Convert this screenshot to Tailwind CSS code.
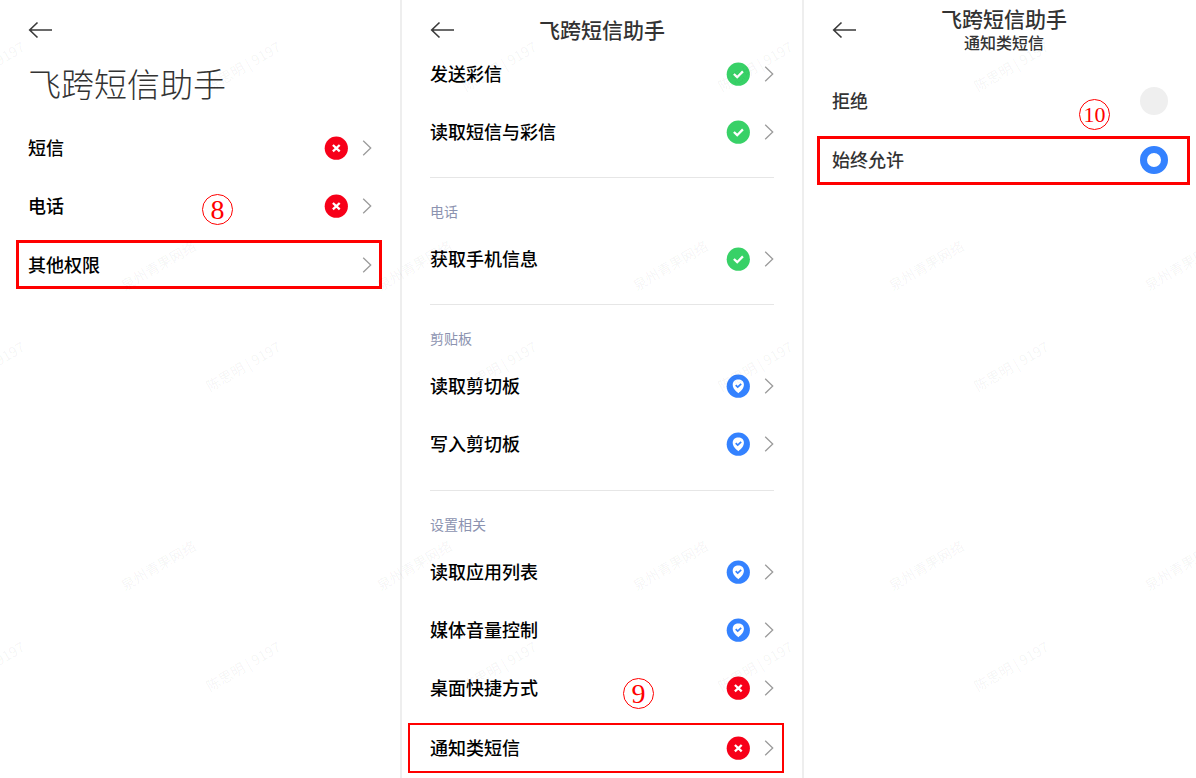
<!DOCTYPE html>
<html lang="zh-CN">
<head>
<meta charset="utf-8">
<meta name="viewport" content="width=device-width, initial-scale=1">
<title>飞跨短信助手</title>
<script src="https://cdn.jsdelivr.net/npm/@tailwindcss/browser@4"></script>
</head>
<body class="relative min-h-screen overflow-x-hidden bg-white font-['Noto_Sans_CJK_SC',sans-serif] text-lg font-medium text-black">

<!-- Shared icon shapes -->
<svg class="hidden" aria-hidden="true">
  <symbol id="back" viewBox="0 0 24 18"><path d="M9.500 1.500 1.700 9 9.500 16.500M2 9H24" fill="none" stroke="#3a3a3a" stroke-width="1.6"/></symbol>
  <symbol id="chevron" viewBox="0 0 10 16"><path d="M1.2 .8 8.7 8 1.2 15.2" fill="none" stroke="#9b9b9b" stroke-width="1.3"/></symbol>
  <symbol id="deny" viewBox="0 0 24 24"><circle cx="12.3" cy="12.200" r="11.600" fill="#f70019"/><path d="M8.900 9 15.700 15.400M15.700 9 8.900 15.400" stroke="#fff" stroke-width="2.3"/></symbol>
  <symbol id="allow" viewBox="0 0 24 24"><circle cx="12.3" cy="12.200" r="11.600" fill="#38d167"/><path d="M7.900 12 11.200 15.200 16.900 9.400" fill="none" stroke="#fff" stroke-width="2.3"/></symbol>
  <symbol id="guard" viewBox="0 0 24 24"><circle cx="12.3" cy="12.2" r="11.6" fill="#3482ff"/><path d="M12.3 5.600C15.300 5.600 17.900 7.300 17.900 10.800C17.900 14.400 15 17 12.300 19.300C9.600 17 6.700 14.400 6.700 10.800C6.700 7.300 9.300 5.600 12.300 5.600Z" fill="#fff"/><path d="M9.700 11.200 11.700 13.100 15.200 9.800" fill="none" stroke="#3482ff" stroke-width="1.7"/></symbol>
</svg>

<main class="grid min-h-screen grid-cols-[400fr_402fr_394fr]">

  <section class="pl-7 pr-7">
    <header class="flex h-[119px] flex-col pt-[21px]">
      <button type="button" aria-label="返回" class="h-[18px] w-6"><svg class="h-[18px] w-6"><use href="#back"/></svg></button>
      <h1 class="mt-[19px] text-[33px] leading-[50px] font-light text-[#333]">飞跨短信助手</h1>
    </header>
    <div class="relative">
      <button type="button" class="flex h-[58px] w-full items-center"><span class="mr-auto pb-0.5">短信</span><svg class="h-6 w-6"><use href="#deny"/></svg><svg class="ml-3.5 h-4 w-2.5"><use href="#chevron"/></svg></button>
      <button type="button" class="flex h-[58px] w-full items-center"><span class="mr-auto pb-0.5">电话</span><svg class="h-6 w-6"><use href="#deny"/></svg><svg class="ml-3.5 h-4 w-2.5"><use href="#chevron"/></svg></button>
      <div class="-mr-2.5 -ml-3 mt-[5px]">
        <button type="button" class="flex h-[49px] w-full items-center border-3 border-[#f00] pr-[7px] pl-[9px]"><span class="mr-auto pb-0.5">其他权限</span><svg class="h-4 w-2.5"><use href="#chevron"/></svg></button>
      </div>
      <span class="absolute top-[75px] left-[174px] flex size-[31px] items-center justify-center rounded-full border border-[#f00] font-['Liberation_Serif',serif] text-[28px] leading-none font-normal text-[#f00]">8</span>
    </div>
  </section>

  <section class="border-l-2 border-[#eee] pl-7 pr-7">
    <header class="grid h-[45px] grid-cols-[24px_1fr_24px] pt-[21px]">
      <button type="button" aria-label="返回" class="h-[18px] w-6"><svg class="h-[18px] w-6"><use href="#back"/></svg></button>
      <h2 class="text-center text-[21px] leading-4 text-[#333]">飞跨短信助手</h2>
    </header>
    <div class="pb-4">
      <button type="button" class="flex h-[58px] w-full items-center"><span class="mr-auto pb-0.5">发送彩信</span><svg class="h-6 w-6"><use href="#allow"/></svg><svg class="ml-3.5 h-4 w-2.5"><use href="#chevron"/></svg></button>
      <button type="button" class="flex h-[58px] w-full items-center"><span class="mr-auto pb-0.5">读取短信与彩信</span><svg class="h-6 w-6"><use href="#allow"/></svg><svg class="ml-3.5 h-4 w-2.5"><use href="#chevron"/></svg></button>
    </div>
    <div class="border-t border-[#e6e6e6] pb-4">
      <h3 class="flex h-[52px] items-center pt-3.5 text-sm font-normal text-[#8c93b0]">电话</h3>
      <button type="button" class="flex h-[58px] w-full items-center"><span class="mr-auto pb-0.5">获取手机信息</span><svg class="h-6 w-6"><use href="#allow"/></svg><svg class="ml-3.5 h-4 w-2.5"><use href="#chevron"/></svg></button>
    </div>
    <div class="border-t border-[#e6e6e6] pb-[17px]">
      <h3 class="flex h-[52px] items-center pt-3.5 text-sm font-normal text-[#8c93b0]">剪贴板</h3>
      <button type="button" class="flex h-[58px] w-full items-center"><span class="mr-auto pb-0.5">读取剪切板</span><svg class="h-6 w-6"><use href="#guard"/></svg><svg class="ml-3.5 h-4 w-2.5"><use href="#chevron"/></svg></button>
      <button type="button" class="flex h-[58px] w-full items-center"><span class="mr-auto pb-0.5">写入剪切板</span><svg class="h-6 w-6"><use href="#guard"/></svg><svg class="ml-3.5 h-4 w-2.5"><use href="#chevron"/></svg></button>
    </div>
    <div class="relative border-t border-[#e6e6e6]">
      <h3 class="flex h-[52px] items-center pt-3.5 text-sm font-normal text-[#8c93b0]">设置相关</h3>
      <button type="button" class="flex h-[58px] w-full items-center"><span class="mr-auto pb-0.5">读取应用列表</span><svg class="h-6 w-6"><use href="#guard"/></svg><svg class="ml-3.5 h-4 w-2.5"><use href="#chevron"/></svg></button>
      <button type="button" class="flex h-[58px] w-full items-center"><span class="mr-auto pb-0.5">媒体音量控制</span><svg class="h-6 w-6"><use href="#guard"/></svg><svg class="ml-3.5 h-4 w-2.5"><use href="#chevron"/></svg></button>
      <button type="button" class="flex h-[58px] w-full items-center"><span class="mr-auto pb-0.5">桌面快捷方式</span><svg class="h-6 w-6"><use href="#deny"/></svg><svg class="ml-3.5 h-4 w-2.5"><use href="#chevron"/></svg></button>
      <div class="-mr-2.5 -ml-[22px] mt-1.5">
        <button type="button" class="flex h-[50px] w-full items-center border-2 border-[#f00] pr-2 pl-5"><span class="mr-auto pb-0.5">通知类短信</span><svg class="h-6 w-6"><use href="#deny"/></svg><svg class="ml-3.5 h-4 w-2.5"><use href="#chevron"/></svg></button>
      </div>
      <span class="absolute top-[187px] left-[193px] flex size-[31px] items-center justify-center rounded-full border border-[#f00] font-['Liberation_Serif',serif] text-[28px] leading-none font-normal text-[#f00]">9</span>
    </div>
  </section>

  <section class="border-l-2 border-[#eee] pl-7 pr-7 text-[#333]">
    <header class="-mr-2 grid h-[72px] grid-cols-[24px_1fr_24px]">
      <button type="button" aria-label="返回" class="mt-[21px] h-[18px] w-6"><svg class="h-[18px] w-6"><use href="#back"/></svg></button>
      <div class="pt-1 text-center">
        <h2 class="text-[21px] leading-7">飞跨短信助手</h2>
        <p class="text-base leading-5">通知类短信</p>
      </div>
    </header>
    <div class="relative">
      <label for="reject" class="flex h-[58px] items-center"><span class="mr-auto pb-0.5">拒绝</span><input id="reject" type="radio" name="permission" class="size-7 appearance-none rounded-full bg-[#efefef]"></label>
      <div class="-mr-[22px] -ml-[15px] mt-1.5">
        <label for="always" class="flex h-[49px] items-center border-3 border-[#f00] pr-[19px] pb-0.5 pl-3"><span class="mr-auto pb-0.5">始终允许</span><input id="always" type="radio" name="permission" checked class="size-7 appearance-none rounded-full border-7 border-[#3482ff] bg-white"></label>
      </div>
      <span class="absolute top-[27px] right-[58px] flex size-[31px] items-center justify-center rounded-full border border-[#f00] font-['Liberation_Serif',serif] text-[22px] leading-none font-normal text-[#f00]">10</span>
    </div>
  </section>
</main>

<!-- Watermark laid over the whole page -->
<svg class="pointer-events-none absolute inset-0 h-full w-full" aria-hidden="true">
  <g class="text-sm font-normal" fill="#000" fill-opacity=".05" text-anchor="middle" dominant-baseline="central">
    <text transform="translate(-13 66) rotate(-30)">陈思明 | 9197</text>
    <text transform="translate(243 66) rotate(-30)">陈思明 | 9197</text>
    <text transform="translate(499 66) rotate(-30)">陈思明 | 9197</text>
    <text transform="translate(755 66) rotate(-30)">陈思明 | 9197</text>
    <text transform="translate(1011 66) rotate(-30)">陈思明 | 9197</text>
    <text transform="translate(158 265) rotate(-30)">泉州青果网络</text>
    <text transform="translate(414 265) rotate(-30)">泉州青果网络</text>
    <text transform="translate(670 265) rotate(-30)">泉州青果网络</text>
    <text transform="translate(926 265) rotate(-30)">泉州青果网络</text>
    <text transform="translate(1182 265) rotate(-30)">泉州青果网络</text>
    <text transform="translate(-13 366) rotate(-30)">陈思明 | 9197</text>
    <text transform="translate(243 366) rotate(-30)">陈思明 | 9197</text>
    <text transform="translate(499 366) rotate(-30)">陈思明 | 9197</text>
    <text transform="translate(755 366) rotate(-30)">陈思明 | 9197</text>
    <text transform="translate(1011 366) rotate(-30)">陈思明 | 9197</text>
    <text transform="translate(158 565) rotate(-30)">泉州青果网络</text>
    <text transform="translate(414 565) rotate(-30)">泉州青果网络</text>
    <text transform="translate(670 565) rotate(-30)">泉州青果网络</text>
    <text transform="translate(926 565) rotate(-30)">泉州青果网络</text>
    <text transform="translate(1182 565) rotate(-30)">泉州青果网络</text>
    <text transform="translate(-13 666) rotate(-30)">陈思明 | 9197</text>
    <text transform="translate(243 666) rotate(-30)">陈思明 | 9197</text>
    <text transform="translate(499 666) rotate(-30)">陈思明 | 9197</text>
    <text transform="translate(755 666) rotate(-30)">陈思明 | 9197</text>
    <text transform="translate(1011 666) rotate(-30)">陈思明 | 9197</text>
  </g>
</svg>
</body>
</html>
